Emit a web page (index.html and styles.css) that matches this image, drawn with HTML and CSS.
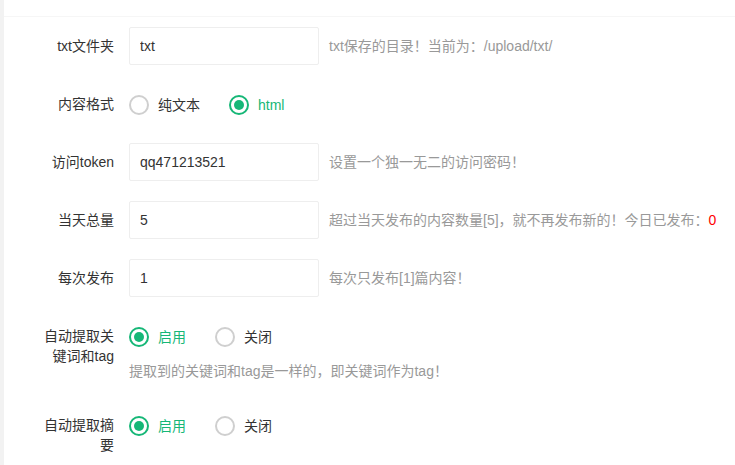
FILE: index.html
```html
<!DOCTYPE html>
<html>
    <head>
        <meta charset="utf-8">
        <title>发布设置</title>
        <link rel="stylesheet" href="styles.css">
    </head>
    <body>
        <div class="page">
            <div class="card">
                <div class="card-header">发布设置</div>
                <div class="card-body">
                    <form class="form">

                        <div class="form-item">
                            <label class="form-label">txt文件夹</label>
                            <div class="input-inline"><input class="input" type="text" value="txt"></div>
                            <div class="word-aux">txt保存的目录！当前为：/upload/txt/</div>
                        </div>

                        <div class="form-item">
                            <label class="form-label">内容格式</label>
                            <div class="radio-group">
                                <span class="radio"><i class="radio-icon"></i>纯文本</span>
                                <span class="radio checked"><i class="radio-icon"></i>html</span>
                            </div>
                        </div>

                        <div class="form-item">
                            <label class="form-label">访问token</label>
                            <div class="input-inline"><input class="input" type="text" value="qq471213521"></div>
                            <div class="word-aux">设置一个独一无二的访问密码！</div>
                        </div>

                        <div class="form-item">
                            <label class="form-label">当天总量</label>
                            <div class="input-inline"><input class="input" type="text" value="5"></div>
                            <div class="word-aux">超过当天发布的内容数量[5]，就不再发布新的！今日已发布：<span class="red">0</span></div>
                        </div>

                        <div class="form-item">
                            <label class="form-label">每次发布</label>
                            <div class="input-inline"><input class="input" type="text" value="1"></div>
                            <div class="word-aux">每次只发布[1]篇内容！</div>
                        </div>

                        <div class="form-item">
                            <label class="form-label">自动提取关键词和tag</label>
                            <div class="input-block">
                                <div class="radio-group">
                                    <span class="radio checked"><i class="radio-icon"></i>启用</span>
                                    <span class="radio"><i class="radio-icon"></i>关闭</span>
                                </div>
                                <div class="word-aux below">提取到的关键词和tag是一样的，即关键词作为tag！</div>
                            </div>
                        </div>

                        <div class="form-item">
                            <label class="form-label">自动提取摘要</label>
                            <div class="radio-group">
                                <span class="radio checked"><i class="radio-icon"></i>启用</span>
                                <span class="radio"><i class="radio-icon"></i>关闭</span>
                            </div>
                        </div>

                    </form>
                </div><!-- end card-body -->
            </div><!-- end card -->
        </div>
    </body>
</html>
```

FILE: styles.css
```css
*{
    box-sizing: border-box;
}

body{
    margin: 0;
    background-color: #f2f2f2;
    font-family: "Liberation Sans", "Noto Sans CJK SC", sans-serif;
    font-size: 14px;
    color: #333;
    overflow: hidden;
}

.page{
    padding-left: 4px;
    height: 465px;
    overflow: hidden;
}

.card{
    background-color: #fff;
    margin-top: -26px;
    min-height: 491px;
}

.card-header{
    height: 43px;
    line-height: 38px;
    padding: 0 36px;
    border-bottom: 1px solid #f6f6f6;
    color: #333;
}

.card-body{
    padding: 10px 15px;
}

.form{
    margin: 0;
}

.form-item{
    display: flex;
    align-items: flex-start;
    margin-bottom: 20px;
}

.form-label{
    width: 110px;
    flex-shrink: 0;
    padding: 9px 15px;
    line-height: 20px;
    text-align: right;
    color: #333;
}

.input-inline{
    width: 190px;
    margin-right: 10px;
}

.input{
    display: block;
    width: 100%;
    height: 38px;
    border: 1px solid #eee;
    border-radius: 2px;
    padding: 0 10px;
    font-family: inherit;
    font-size: 14px;
    color: #333;
    background-color: #fff;
    outline: none;
}

.word-aux{
    padding: 9px 0;
    line-height: 20px;
    color: #999;
    white-space: nowrap;
}

.word-aux.below{
    padding: 6px 0 5px;
}

.red{
    color: #ff0000;
}

.radio-group{
    display: flex;
    align-items: center;
    height: 38px;
    padding-top: 1px;
}

.radio{
    display: flex;
    align-items: center;
    gap: 9px;
    margin-right: 29px;
    line-height: 20px;
    color: #333;
}

.radio-icon{
    display: block;
    width: 20px;
    height: 20px;
    border: 2px solid #cfcfcf;
    border-radius: 50%;
    position: relative;
}

.radio.checked{
    color: #16b777;
}

.radio.checked .radio-icon{
    border-color: #16b777;
}

.radio.checked .radio-icon::after{
    content: "";
    position: absolute;
    left: 3px;
    top: 3px;
    width: 10px;
    height: 10px;
    border-radius: 50%;
    background-color: #16b777;
}
```
